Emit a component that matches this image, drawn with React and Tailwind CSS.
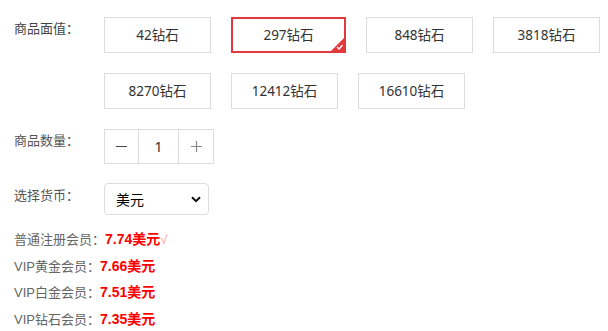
import React from "react";

const font = { fontFamily: '"Noto Sans", "Noto Sans CJK SC", sans-serif' };
const arial = { fontFamily: '"Liberation Sans", "Noto Sans CJK SC", sans-serif' };

function Box({ children, selected }) {
  if (selected) {
    return (
      <div className="relative w-[115px] h-[36px] border-2 border-[#e4393c] flex items-center justify-center text-[13.5px] text-[#333] bg-white">
        {children}
        <div className="absolute right-0 bottom-0 w-[13px] h-[13px]">
          <svg width="13" height="13" viewBox="0 0 13 13">
            <polygon points="13,0 13,13 0,13" fill="#e4393c" />
            <polyline points="6,9 8,11 11.5,7" fill="none" stroke="#fff" strokeWidth="1.4" />
          </svg>
        </div>
      </div>
    );
  }
  return (
    <div className="w-[107px] h-[36px] border border-[#ddd] flex items-center justify-center text-[13.5px] text-[#333] bg-white">
      {children}
    </div>
  );
}

function Price({ children }) {
  return <span className="text-[#f00] font-bold text-[14px] leading-[1]">{children}</span>;
}

export default function App() {
  return (
    <div className="w-[608px] h-[331px] bg-white pl-[14px] pt-[17px] overflow-hidden" style={font}>
      <div className="flex">
        <div className="w-[90px] shrink-0 text-[13px] text-[#444] leading-[20px] pt-[1px]">商品面值：</div>
        <div className="w-[496px] flex flex-wrap gap-x-[20px] gap-y-[20px]">
          <Box>42钻石</Box>
          <Box selected>297钻石</Box>
          <Box>848钻石</Box>
          <Box>3818钻石</Box>
          <Box>8270钻石</Box>
          <Box>12412钻石</Box>
          <Box>16610钻石</Box>
        </div>
      </div>

      <div className="flex mt-[20px]">
        <div className="w-[90px] shrink-0 text-[13px] text-[#555] leading-[20px] pt-[1px]">商品数量：</div>
        <div className="flex h-[35px] border border-[#ddd]">
          <div className="w-[34px] flex items-center justify-center border-r border-[#ddd]">
            <div className="w-[11px] h-[1px] bg-[#444]" />
          </div>
          <div className="w-[40px] flex items-center justify-center border-r border-[#ddd] text-[14px] text-[#333]">1</div>
          <div className="w-[34px] flex items-center justify-center">
            <svg width="11" height="11" viewBox="0 0 11 11">
              <path d="M5.5 0V11M0 5.5H11" stroke="#888" strokeWidth="1.2" />
            </svg>
          </div>
        </div>
      </div>

      <div className="flex mt-[19px]">
        <div className="w-[90px] shrink-0 text-[13px] text-[#555] leading-[20px] pt-[2px]">选择货币：</div>
        <div className="w-[105px] h-[32px] border border-[#ddd] rounded-[4px] flex items-center justify-between pl-[11px] pr-[7px] bg-white">
          <span className="text-[14px] text-black">美元</span>
          <svg width="10" height="7" viewBox="0 0 10 7">
            <path d="M1 1.2L5 5.2L9 1.2" fill="none" stroke="#111" strokeWidth="2" />
          </svg>
        </div>
      </div>

      <div className="mt-[12px] text-[13px] leading-[26.67px] text-[#666]" style={arial}>
        <div>
          普通注册会员：<Price>7.74美元</Price>
          <span className="text-[#f99] leading-[1]">√</span>
        </div>
        <div>
          VIP黄金会员：<Price>7.66美元</Price>
        </div>
        <div>
          VIP白金会员：<Price>7.51美元</Price>
        </div>
        <div>
          VIP钻石会员：<Price>7.35美元</Price>
        </div>
      </div>
    </div>
  );
}
